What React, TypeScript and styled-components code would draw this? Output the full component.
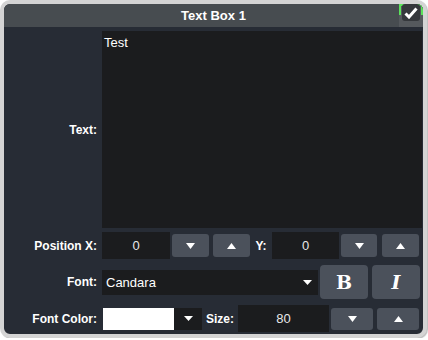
import styled, { createGlobalStyle } from "styled-components";

const Global = createGlobalStyle`
  html, body {
    margin: 0;
    background: #ffffff;
  }
  * {
    box-sizing: border-box;
  }
`;

const Frame = styled.div`
  width: 427px;
  height: 338px;
  border: 4px solid #d4d4d4;
  border-radius: 10px;
  background: #272c35;
  overflow: hidden;
  display: flex;
  flex-direction: column;
  font-family: "Liberation Sans", Arial, sans-serif;
  color: #ffffff;
  box-shadow: 1px 1px 1px #bdbdbd;
`;

const TitleBar = styled.div`
  position: relative;
  height: 23px;
  flex: none;
  background: #474c50;
  display: flex;
  align-items: center;
  justify-content: center;
  font-size: 13px;
  font-weight: 700;
`;

const CheckButton = styled.button`
  position: absolute;
  top: 0;
  right: 0;
  width: 24px;
  height: 23px;
  padding: 0 0 0 3px;
  border: none;
  background: #55595d;
  display: flex;
  align-items: flex-start;
  cursor: pointer;

  &::before {
    content: "";
    position: absolute;
    left: 0;
    right: 0;
    top: 0;
    height: 9px;
    border: 2px solid #5be35b;
    border-bottom: none;
  }
`;

const CheckFace = styled.span`
  position: relative;
  width: 18px;
  height: 17px;
  border-radius: 3px;
  background: #35383c;
  display: flex;
  align-items: center;
  justify-content: center;
`;

const Body = styled.div`
  flex: 1;
  display: flex;
  flex-direction: column;
  padding: 4px 1px 0 0;
`;

const Row = styled.div<{ $h: number; $mt?: number }>`
  display: flex;
  align-items: center;
  height: ${({ $h }) => $h}px;
  margin-top: ${({ $mt }) => $mt ?? 0}px;
`;

const Label = styled.div`
  width: 98px;
  flex: none;
  text-align: right;
  padding-right: 5px;
  font-size: 12px;
  font-weight: 700;
`;

const InlineLabel = styled.div<{ $w: number }>`
  width: ${({ $w }) => $w}px;
  flex: none;
  text-align: center;
  font-size: 12px;
  font-weight: 700;
`;

const TextArea = styled.div`
  flex: 1;
  align-self: stretch;
  background: #1b1c1e;
  padding: 4px 2px;
  font-size: 13px;
`;

const Field = styled.div<{ $w: number; $h: number }>`
  width: ${({ $w }) => $w}px;
  height: ${({ $h }) => $h}px;
  flex: none;
  background: #1b1c1e;
  display: flex;
  align-items: center;
  justify-content: center;
  font-size: 13px;
  color: #e8e8e8;
`;

const Select = styled.div`
  width: 216px;
  height: 25px;
  flex: none;
  background: #1b1c1e;
  display: flex;
  align-items: center;
  justify-content: space-between;
  padding: 0 6px 0 4px;
  font-size: 13px;
`;

const ColorPicker = styled.div`
  width: 99px;
  height: 22px;
  flex: none;
  display: flex;
  margin-left: 1px;
`;

const Swatch = styled.div`
  width: 71px;
  background: #ffffff;
`;

const PickerArrow = styled.div`
  flex: 1;
  background: #1b1c1e;
  display: flex;
  align-items: center;
  justify-content: center;
`;

const StepButton = styled.button<{ $w: number; $h: number; $ml: number }>`
  width: ${({ $w }) => $w}px;
  height: ${({ $h }) => $h}px;
  margin-left: ${({ $ml }) => $ml}px;
  flex: none;
  border: none;
  border-radius: 3px;
  background: #4b515b;
  display: flex;
  align-items: center;
  justify-content: center;
  padding: 0;
`;

const StyleButton = styled.button<{ $italic?: boolean; $ml: number }>`
  width: 48px;
  height: 34px;
  margin-left: ${({ $ml }) => $ml}px;
  flex: none;
  border: none;
  border-radius: 4px;
  background: #4b515b;
  color: #ffffff;
  font-family: "DejaVu Serif", "Liberation Serif", serif;
  font-size: 19px;
  font-weight: 700;
  font-style: ${({ $italic }) => ($italic ? "italic" : "normal")};
  display: flex;
  align-items: center;
  justify-content: center;
  padding: 0;
`;

function Tri({ up }: { up?: boolean }) {
  return (
    <svg width="9" height="6" viewBox="0 0 9 6">
      <polygon points={up ? "4.5,0 9,6 0,6" : "0,0 9,0 4.5,6"} fill="#ffffff" />
    </svg>
  );
}

function Caret() {
  return (
    <svg width="9" height="5" viewBox="0 0 9 5">
      <polygon points="0,0 9,0 4.5,5" fill="#ffffff" />
    </svg>
  );
}

export default function App() {
  return (
    <>
      <Global />
      <Frame>
        <TitleBar>
          Text Box 1
          <CheckButton aria-label="Apply">
            <CheckFace>
              <svg width="14" height="12" viewBox="0 0 14 12">
                <path d="M1.5 6.5 L5 10 L12.5 1.5" stroke="#ffffff" strokeWidth="3" fill="none" />
              </svg>
            </CheckFace>
          </CheckButton>
        </TitleBar>
        <Body>
          <Row $h={197}>
            <Label>Text:</Label>
            <TextArea>Test</TextArea>
          </Row>
          <Row $h={27} $mt={4}>
            <Label>Position X:</Label>
            <Field $w={68} $h={27}>0</Field>
            <StepButton $w={37} $h={23} $ml={2}><Tri /></StepButton>
            <StepButton $w={37} $h={23} $ml={4}><Tri up /></StepButton>
            <InlineLabel $w={22}>Y:</InlineLabel>
            <Field $w={67} $h={27}>0</Field>
            <StepButton $w={36} $h={23} $ml={2}><Tri /></StepButton>
            <StepButton $w={37} $h={23} $ml={5}><Tri up /></StepButton>
          </Row>
          <Row $h={34} $mt={6}>
            <Label>Font:</Label>
            <Select>
              <span>Candara</span>
              <Caret />
            </Select>
            <StyleButton $ml={2}>B</StyleButton>
            <StyleButton $ml={4} $italic>I</StyleButton>
          </Row>
          <Row $h={27} $mt={6}>
            <Label>Font Color:</Label>
            <ColorPicker>
              <Swatch />
              <PickerArrow><Caret /></PickerArrow>
            </ColorPicker>
            <InlineLabel $w={36}>Size:</InlineLabel>
            <Field $w={91} $h={27}>80</Field>
            <StepButton $w={42} $h={22} $ml={2}><Tri /></StepButton>
            <StepButton $w={42} $h={22} $ml={4}><Tri up /></StepButton>
          </Row>
        </Body>
      </Frame>
    </>
  );
}
